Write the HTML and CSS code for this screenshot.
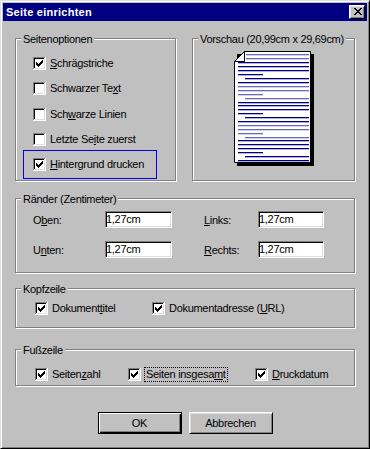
FILE: index.html
```html
<!DOCTYPE html>
<html lang="de">
<head>
<meta charset="utf-8">
<title>Seite einrichten</title>
<link rel="stylesheet" href="styles.css">
</head>
<body>
<svg class="defs" width="0" height="0" aria-hidden="true">
  <defs>
    <symbol id="cboff" viewBox="0 0 13 13">
      <path d="M0 0h12v1H1v11H0z" fill="#808080"/>
      <path d="M12 0h1v13H0v-1h12z" fill="#ffffff"/>
      <path d="M1 1h10v1H2v9H1z" fill="#000000"/>
      <path d="M11 1h1v11H1v-1h10z" fill="#dfdfdf"/>
      <rect x="2" y="2" width="9" height="9" fill="#ffffff"/>
    </symbol>
    <symbol id="cbon" viewBox="0 0 13 13">
      <path d="M0 0h12v1H1v11H0z" fill="#808080"/>
      <path d="M12 0h1v13H0v-1h12z" fill="#ffffff"/>
      <path d="M1 1h10v1H2v9H1z" fill="#000000"/>
      <path d="M11 1h1v11H1v-1h10z" fill="#dfdfdf"/>
      <rect x="2" y="2" width="9" height="9" fill="#ffffff"/>
      <path d="M3 5h1v3H3zM4 6h1v3H4zM5 7h1v3H5zM6 6h1v3H6zM7 5h1v3H7zM8 4h1v3H8zM9 3h1v3H9z" fill="#000000"/>
    </symbol>
  </defs>
</svg>
<div class="window">
  <div class="titlebar">
    <span class="title">Seite einrichten</span>
    <span class="close">
      <svg width="8" height="7" viewBox="0 0 8 7" shape-rendering="crispEdges"><path d="M0 0h2v1H0zM6 0h2v1H6zM1 1h2v1H1zM5 1h2v1H5zM2 2h4v1H2zM3 3h2v1H3zM2 4h4v1H2zM1 5h2v1H1zM5 5h2v1H5zM0 6h2v1H0zM6 6h2v1H6z" fill="#000"/></svg>
    </span>
  </div>
  <div class="content">
    <div class="toprow">
      <div class="group opts">
        <span class="legend">Seitenoptionen</span>
        <div class="cbrow"><svg class="cb" shape-rendering="crispEdges"><use href="#cbon"/></svg><span><u>S</u>chrägstriche</span></div>
        <div class="cbrow"><svg class="cb" shape-rendering="crispEdges"><use href="#cboff"/></svg><span>Schwarzer Te<u>x</u>t</span></div>
        <div class="cbrow"><svg class="cb" shape-rendering="crispEdges"><use href="#cboff"/></svg><span>Sch<u>w</u>arze Linien</span></div>
        <div class="cbrow"><svg class="cb" shape-rendering="crispEdges"><use href="#cboff"/></svg><span>Letzte Se<u>i</u>te zuerst</span></div>
        <div class="cbrow focus"><svg class="cb" shape-rendering="crispEdges"><use href="#cbon"/></svg><span><u>H</u>intergrund drucken</span></div>
      </div>
      <div class="group preview">
        <span class="legend">Vorschau (20,99cm x 29,69cm)</span>
        <svg class="page" width="80" height="115" viewBox="0 0 80 115">
          <rect x="3" y="3" width="77" height="112" fill="#000"/>
          <polygon points="10.5,0.5 76.5,0.5 76.5,111.5 0.5,111.5 0.5,10.5" fill="#fff" stroke="#000" stroke-width="1"/>
          <polygon points="0.5,10.5 10.5,0.5 10.5,10.5" fill="#fff" stroke="#000" stroke-width="1"/>
          <g fill="#6a6abc">
            <rect x="12" y="3" width="63" height="1.3"/>
            <rect x="12" y="7" width="63" height="1.3"/>
            <rect x="4" y="35" width="71" height="1.3"/>
            <rect x="4" y="39" width="71" height="1.3"/>
            <rect x="4" y="43" width="25" height="1.3"/>
            <rect x="11" y="47" width="64" height="1.3"/>
            <rect x="4" y="74" width="71" height="1.3"/>
            <rect x="4" y="78" width="71" height="1.3"/>
            <rect x="4" y="82" width="25" height="1.3"/>
            <rect x="11" y="86" width="64" height="1.3"/>
          </g>
          <g fill="#000080">
            <rect x="4" y="11" width="71" height="1.3"/>
            <rect x="4" y="15" width="71" height="1.3"/>
            <rect x="4" y="19" width="71" height="1.3"/>
            <rect x="4" y="23" width="25" height="1.3"/>
            <rect x="11" y="27" width="64" height="1.3"/>
            <rect x="4" y="31" width="71" height="1.3"/>
            <rect x="4" y="51" width="71" height="1.3"/>
            <rect x="4" y="54" width="71" height="1.3"/>
            <rect x="4" y="58" width="71" height="1.3"/>
            <rect x="4" y="62" width="25" height="1.3"/>
            <rect x="11" y="66" width="64" height="1.3"/>
            <rect x="4" y="70" width="71" height="1.3"/>
            <rect x="4" y="89" width="71" height="1.3"/>
            <rect x="4" y="93" width="71" height="1.3"/>
            <rect x="4" y="97" width="71" height="1.3"/>
            <rect x="4" y="101" width="25" height="1.3"/>
            <rect x="11" y="105" width="64" height="1.3"/>
            <rect x="4" y="109" width="71" height="1.3"/>
          </g>
        </svg>
      </div>
    </div>

    <div class="group margins">
      <span class="legend">Ränder (Zentimeter)</span>
      <div class="mrow">
        <span class="lbl">O<u>b</u>en:</span><span class="field">1,27cm</span>
        <span class="lbl lbl2"><u>L</u>inks:</span><span class="field field2">1,27cm</span>
      </div>
      <div class="mrow">
        <span class="lbl">U<u>n</u>ten:</span><span class="field">1,27cm</span>
        <span class="lbl lbl2"><u>R</u>echts:</span><span class="field field2">1,27cm</span>
      </div>
    </div>

    <div class="group hdr">
      <span class="legend">Kopfzeile</span>
      <div class="cbrow w1"><svg class="cb" shape-rendering="crispEdges"><use href="#cbon"/></svg><span>Dokument<u>t</u>itel</span></div>
      <div class="cbrow"><svg class="cb" shape-rendering="crispEdges"><use href="#cbon"/></svg><span>Dokumentadresse (<u>U</u>RL)</span></div>
    </div>

    <div class="group ftr">
      <span class="legend">Fußzeile</span>
      <div class="cbrow fw1"><svg class="cb" shape-rendering="crispEdges"><use href="#cbon"/></svg><span>Seiten<u>z</u>ahl</span></div>
      <div class="cbrow fw2"><svg class="cb" shape-rendering="crispEdges"><use href="#cbon"/></svg><span class="dotted">Seiten insgesa<u>m</u>t</span></div>
      <div class="cbrow"><svg class="cb" shape-rendering="crispEdges"><use href="#cbon"/></svg><span><u>D</u>ruckdatum</span></div>
    </div>

    <div class="buttons">
      <span class="btn default">OK</span>
      <span class="btn">Abbrechen</span>
    </div>
  </div>
</div>
</body>
</html>
```

FILE: styles.css
```css
html, body {
  margin: 0;
  padding: 0;
  background: #c0c0c0;
}

body {
  font-family: "Liberation Sans", Arial, sans-serif;
  font-size: 11px;
  letter-spacing: -0.3px;
  color: #000;
}

.defs {
  display: block;
  width: 0;
  height: 0;
  overflow: hidden;
}

.window {
  box-sizing: border-box;
  width: 370px;
  height: 449px;
  border: 1px solid;
  border-color: #dfdfdf #000 #000 #dfdfdf;
  box-shadow: inset 1px 1px 0 #fff, inset -1px -1px 0 #808080;
  padding: 2px;
  background: #c0c0c0;
}

.titlebar {
  height: 18px;
  background: #000080;
  display: flex;
  align-items: flex-start;
}

.title {
  color: #fff;
  font-weight: bold;
  letter-spacing: 0.25px;
  line-height: 18px;
  padding-left: 3px;
}

.close {
  box-sizing: border-box;
  margin: 2px 2px 0 auto;
  width: 16px;
  height: 14px;
  background: #c0c0c0;
  border: 1px solid;
  border-color: #fff #000 #000 #fff;
  box-shadow: inset 1px 1px 0 #dfdfdf, inset -1px -1px 0 #808080;
  display: flex;
  align-items: flex-start;
  justify-content: flex-start;
  padding: 2px 0 0 4px;
}

.close svg {
  display: block;
}

.content {
  padding: 17px 12px 0 12px;
}

.toprow {
  display: flex;
  gap: 16px;
}

.group {
  position: relative;
  box-sizing: border-box;
  border: 1px solid #808080;
  box-shadow: inset 1px 1px 0 #fff, 1px 1px 0 #fff;
}

.legend {
  position: absolute;
  top: -6px;
  left: 5px;
  padding: 0 2px;
  background: #c0c0c0;
  line-height: 13px;
  white-space: nowrap;
}

.opts {
  width: 161px;
  height: 143px;
  display: flex;
  flex-direction: column;
  gap: 12.25px;
  padding: 18px 0 0 17px;
}

.preview {
  width: 163px;
  height: 143px;
  display: flex;
  justify-content: center;
  padding-top: 12px;
}

.page {
  display: block;
  margin-left: 1px;
}

.cbrow {
  display: flex;
  align-items: center;
  height: 13px;
  white-space: nowrap;
}

.cb {
  display: block;
  flex: none;
  width: 13px;
  height: 13px;
  margin-right: 4px;
}

.cbrow span {
  line-height: 13px;
}

.focus {
  box-sizing: border-box;
  width: 134px;
  height: 29px;
  margin: -8px 0 -8px -10px;
  padding-left: 9px;
  border: 1px solid #0000f0;
}

.margins {
  margin-top: 17px;
  height: 75px;
  padding: 12px 0 0 17px;
  display: flex;
  flex-direction: column;
  gap: 13px;
}

.mrow {
  display: flex;
  align-items: center;
  height: 17px;
}

.lbl {
  width: 72px;
  line-height: 13px;
  margin-top: 1px;
}

.lbl2 {
  width: 54px;
  margin-left: 32px;
}

.field {
  box-sizing: border-box;
  width: 67px;
  height: 17px;
  background: #fff;
  border: 1px solid;
  border-color: #808080 #fff #fff #808080;
  box-shadow: inset 1px 1px 0 #000, inset -1px -1px 0 #dfdfdf;
  padding: 1px 0 0 0;
  line-height: 13px;
}

.field2 {
  width: 66px;
}

.hdr {
  margin-top: 15px;
  height: 40px;
  display: flex;
  padding: 13px 0 0 19px;
}

.w1 {
  width: 117px;
}

.ftr {
  margin-top: 21px;
  height: 37px;
  display: flex;
  padding: 18px 0 0 19px;
}

.fw1 {
  width: 93px;
}

.fw2 {
  width: 127px;
}

.cbrow .dotted {
  border: 1px dotted #000;
  padding: 0 1px;
  margin-left: -1px;
}

.buttons {
  margin-top: 26px;
  display: flex;
  justify-content: center;
  gap: 7px;
}

.btn {
  box-sizing: border-box;
  width: 84px;
  height: 22px;
  display: flex;
  align-items: center;
  justify-content: center;
  background: #c0c0c0;
  border: 1px solid;
  border-color: #fff #000 #000 #fff;
  box-shadow: inset 1px 1px 0 #dfdfdf, inset -1px -1px 0 #808080;
  line-height: 13px;
}

.btn.default {
  border-color: #000;
  box-shadow: inset 1px 1px 0 #fff, inset -1px -1px 0 #000, inset -2px -2px 0 #808080;
}
```
